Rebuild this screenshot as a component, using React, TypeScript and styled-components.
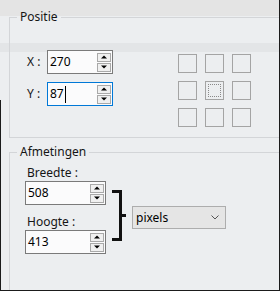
import React from "react";
import styled, { createGlobalStyle } from "styled-components";

const Global = createGlobalStyle`
  html, body { margin: 0; padding: 0; background: #eceef0; }
  body { font-family: "Noto Sans", "Open Sans", sans-serif; font-size: 12px; color: #111; }
`;

const Window = styled.div`
  position: relative;
  width: 280px;
  height: 291px;
  box-sizing: border-box;
  overflow: hidden;
  border-right: 1px solid #1b1b1b;
  border-bottom: 1px solid #1b1b1b;
  background:
    linear-gradient(#1b1b1b, #1b1b1b) no-repeat 0 100px / 1px 100%,
    linear-gradient(
      to bottom,
      #e4e4e4 0px,
      #e4e4e4 16px,
      #eceef0 16px,
      #eceef0 43px,
      #e3e5e7 43px,
      #e3e5e7 52px,
      #eceef0 52px,
      #eceef0 100%
    );
`;

const Group = styled.fieldset<{ $top: number; $height: number }>`
  margin: ${(p) => p.$top}px 0 0 9px;
  padding: 0;
  width: 320px;
  height: ${(p) => p.$height}px;
  box-sizing: border-box;
  border: 1px solid #d3d5d8;
  border-right: none;
  min-width: 0;
`;

const Legend = styled.legend`
  margin-left: 7px;
  padding: 0 3px;
  font-size: 12px;
  line-height: 16px;
  color: #151515;
`;

const PosBody = styled.div`
  display: flex;
  align-items: flex-start;
  padding-top: 25px;
`;

const Rows = styled.div`
  display: flex;
  flex-direction: column;
  gap: 8px;
  padding-left: 17px;
`;

const Row = styled.div`
  display: flex;
  align-items: center;
`;

const AxisLabel = styled.span`
  width: 20px;
  font-size: 12px;
  line-height: 16px;
  color: #151515;
`;

const Field = styled.div<{ $w: number; $focus?: boolean }>`
  position: relative;
  display: flex;
  align-items: center;
  width: ${(p) => p.$w}px;
  height: 24px;
  box-sizing: border-box;
  border: 1px solid ${(p) => (p.$focus ? "#0078d7" : "#7a7a7a")};
  background: #fbfbfc;
  padding-left: 2px;
`;

const Value = styled.span`
  font-size: 12px;
  line-height: 16px;
  color: #000;
`;

const Caret = styled.span`
  display: inline-block;
  width: 1px;
  height: 17px;
  background: #000;
  margin-left: 1px;
`;

const Spinner = styled.div`
  margin-left: auto;
  margin-right: 1px;
  display: flex;
  flex-direction: column;
  gap: 1px;
`;

const SpinBtn = styled.div`
  width: 14px;
  height: 9px;
  box-sizing: border-box;
  border: 1px solid #a9a9a9;
  background: #f0f0f0;
  display: flex;
  align-items: center;
  justify-content: center;
`;

const Anchors = styled.div`
  display: grid;
  grid-template-columns: repeat(3, 19px);
  grid-auto-rows: 19px;
  gap: 8px;
  margin-left: 65px;
  margin-top: 4px;
`;

const Anchor = styled.div<{ $active?: boolean }>`
  box-sizing: border-box;
  border: 1px solid #a4a4a4;
  display: flex;
  align-items: center;
  justify-content: center;
  &::after {
    content: "";
    display: ${(p) => (p.$active ? "block" : "none")};
    width: 13px;
    height: 13px;
    box-sizing: border-box;
    border: 1px dotted #8a8a8a;
  }
`;

const SizeBody = styled.div`
  display: flex;
  align-items: flex-start;
  padding: 4px 0 0 15px;
`;

const SizeCol = styled.div`
  display: flex;
  flex-direction: column;
`;

const FieldLabel = styled.div<{ $gapTop?: number }>`
  font-size: 12px;
  line-height: 17px;
  color: #151515;
  padding-left: 2px;
  margin-top: ${(p) => p.$gapTop ?? 0}px;
`;

const Bracket = styled.svg`
  display: block;
  margin-left: 6px;
  margin-top: 26px;
`;

const Select = styled.div`
  display: flex;
  align-items: center;
  width: 94px;
  height: 23px;
  box-sizing: border-box;
  border: 1px solid #adadad;
  background: #e5e5e5;
  padding: 0 6px 0 3px;
  margin-left: 6px;
  margin-top: 42px;
  font-size: 12px;
  line-height: 16px;
  color: #000;
`;

const Chevron = styled.svg`
  margin-left: auto;
`;

const Arrow = ({ up }: { up?: boolean }) => (
  <svg width="6" height="4" viewBox="0 0 6 4">
    {up ? <path d="M0 3.5 L3 0.5 L6 3.5 Z" fill="#000" /> : <path d="M0 0.5 L3 3.5 L6 0.5 Z" fill="#000" />}
  </svg>
);

const SpinField = ({ w, value, focus }: { w: number; value: string; focus?: boolean }) => (
  <Field $w={w} $focus={focus}>
    <Value>{value}</Value>
    {focus && <Caret />}
    <Spinner>
      <SpinBtn>
        <Arrow up />
      </SpinBtn>
      <SpinBtn>
        <Arrow />
      </SpinBtn>
    </Spinner>
  </Field>
);

export default function App() {
  return (
    <>
      <Global />
      <Window>
        <Group $top={9} $height={129}>
          <Legend>Positie</Legend>
          <PosBody>
            <Rows>
              <Row>
                <AxisLabel>X :</AxisLabel>
                <SpinField w={66} value="270" />
              </Row>
              <Row>
                <AxisLabel>Y :</AxisLabel>
                <SpinField w={66} value="87" focus />
              </Row>
            </Rows>
            <Anchors>
              {Array.from({ length: 9 }).map((_, i) => (
                <Anchor key={i} $active={i === 4} />
              ))}
            </Anchors>
          </PosBody>
        </Group>
        <Group $top={6} $height={200}>
          <Legend>Afmetingen</Legend>
          <SizeBody>
            <SizeCol>
              <FieldLabel>Breedte :</FieldLabel>
              <SpinField w={81} value="508" />
              <FieldLabel $gapTop={8}>Hoogte :</FieldLabel>
              <SpinField w={81} value="413" />
            </SizeCol>
            <Bracket width="14" height="51" viewBox="0 0 14 51">
              <path d="M0 1.5 H8.5 V49.5 H0 M8.5 25.5 H14" stroke="#111" strokeWidth="3" fill="none" />
            </Bracket>
            <Select>
              <span>pixels</span>
              <Chevron width="8" height="5" viewBox="0 0 8 5">
                <path d="M0.5 0.5 L4 4 L7.5 0.5" stroke="#555" strokeWidth="1" fill="none" />
              </Chevron>
            </Select>
          </SizeBody>
        </Group>
      </Window>
    </>
  );
}
